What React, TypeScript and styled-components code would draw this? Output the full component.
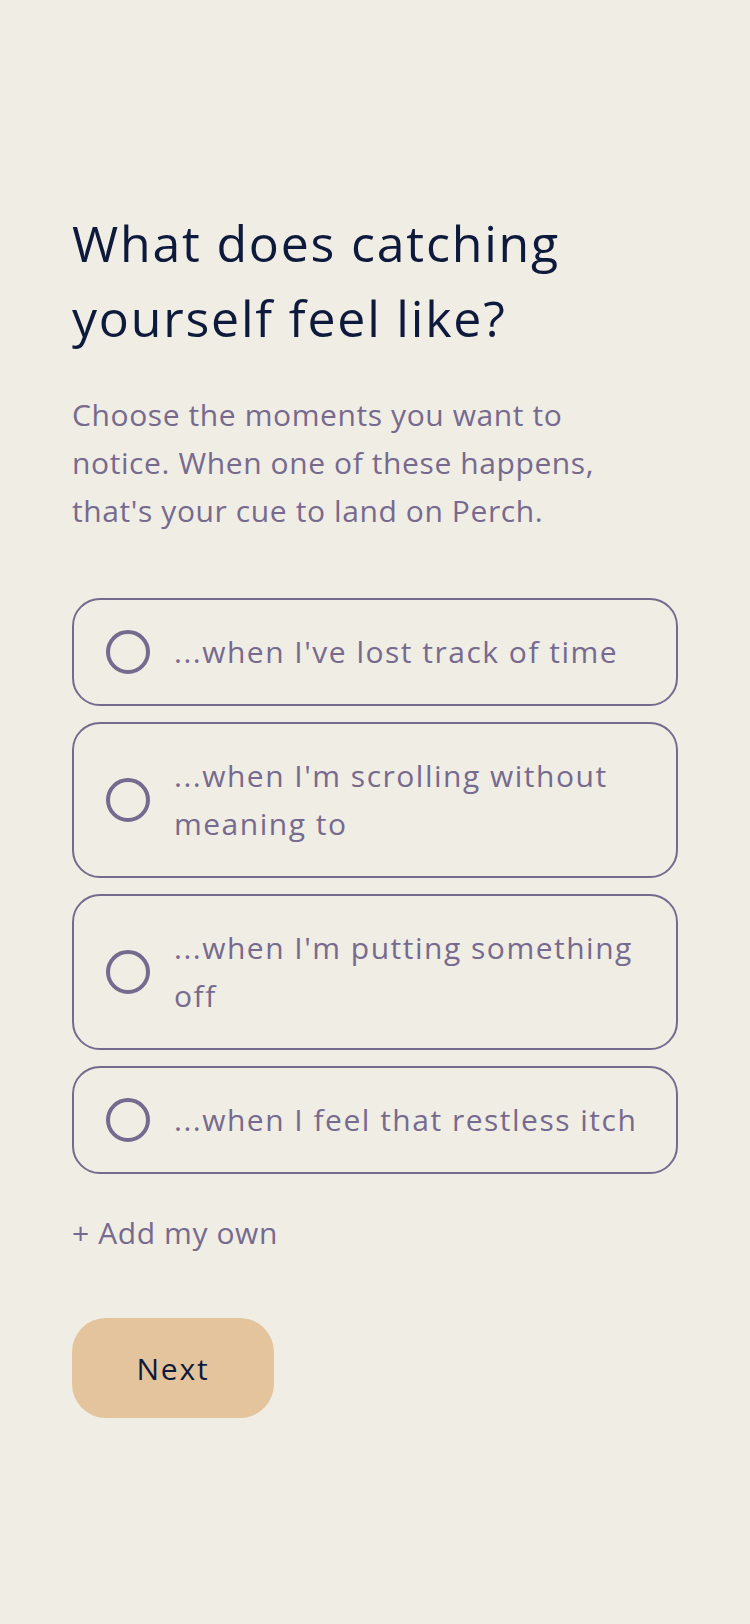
import styled, { createGlobalStyle } from 'styled-components';
import React, { useState } from 'react';

const GlobalStyle = createGlobalStyle`
  html, body {
    margin: 0;
    padding: 0;
    background-color: #f0ede5;
  }
  body {
    font-family: "Open Sans", "Noto Sans", sans-serif;
    -webkit-font-smoothing: antialiased;
  }
`

const triggers = [
  "...when I've lost track of time",
  "...when I'm scrolling without meaning to",
  "...when I'm putting something off",
  "...when I feel that restless itch",
];

function App() {
  const [picked, setPicked] = useState<number[]>([]);

  const toggle = (idx: number) => {
    setPicked(prev => prev.includes(idx) ? prev.filter(i => i !== idx) : [...prev, idx]);
  };

  return (
    <Page>
      <GlobalStyle />
      <Title>What does catching yourself feel like?</Title>
      <Intro>
        Choose the moments you want to notice. When one of these happens,
        that's your cue to land on Perch.
      </Intro>

      <OptionList>
        {triggers.map((label, idx) => (
          <Option key={idx} $active={picked.includes(idx)} onClick={() => toggle(idx)}>
            <Radio $active={picked.includes(idx)} />
            <OptionLabel>{label}</OptionLabel>
          </Option>
        ))}
      </OptionList>

      <AddOwn>+ Add my own</AddOwn>

      <NextBtn>Next</NextBtn>
    </Page>
  );
}

export default App;

const Page = styled.main`
  min-height: 1624px;
  box-sizing: border-box;
  padding: 206px 72px 0;
  display: flex;
  flex-direction: column;
  align-items: flex-start;
`

const Title = styled.h1`
  margin: 0;
  font-size: 50px;
  line-height: 75px;
  font-weight: 400;
  letter-spacing: 1.8px;
  color: #0e1a3c;
`

const Intro = styled.p`
  margin: 35px 0 0;
  max-width: 560px;
  font-size: 30px;
  line-height: 48px;
  letter-spacing: 0.6px;
  color: #766a8e;
`

const OptionList = styled.div`
  width: 100%;
  margin-top: 63px;
  display: flex;
  flex-direction: column;
  gap: 16px;
`

const Option = styled.button<{ $active: boolean }>`
  display: flex;
  align-items: center;
  gap: 24px;
  width: 100%;
  box-sizing: border-box;
  padding: 28px 32px;
  border: 2px solid #766a8e;
  border-radius: 28px;
  background: ${p => (p.$active ? '#e8e2ec' : 'transparent')};
  text-align: left;
  font-family: inherit;
  cursor: pointer;
`

const Radio = styled.span<{ $active: boolean }>`
  flex: none;
  width: 44px;
  height: 44px;
  box-sizing: border-box;
  border-radius: 50%;
  border: 4px solid #766a8e;
  background: ${p => (p.$active ? 'radial-gradient(circle, #766a8e 45%, transparent 50%)' : 'transparent')};
`

const OptionLabel = styled.span`
  font-size: 30px;
  line-height: 48px;
  letter-spacing: 1.5px;
  color: #766a8e;
`

const AddOwn = styled.button`
  margin-top: 35px;
  padding: 0;
  border: none;
  background: none;
  font-family: inherit;
  font-size: 30px;
  line-height: 48px;
  letter-spacing: 0.6px;
  color: #766a8e;
  cursor: pointer;
`

const NextBtn = styled.button`
  margin-top: 61px;
  width: 202px;
  height: 100px;
  border: none;
  border-radius: 34px;
  background-color: #e3c49c;
  font-family: inherit;
  font-size: 30px;
  letter-spacing: 1.8px;
  color: #0e1a3c;
  cursor: pointer;
`
